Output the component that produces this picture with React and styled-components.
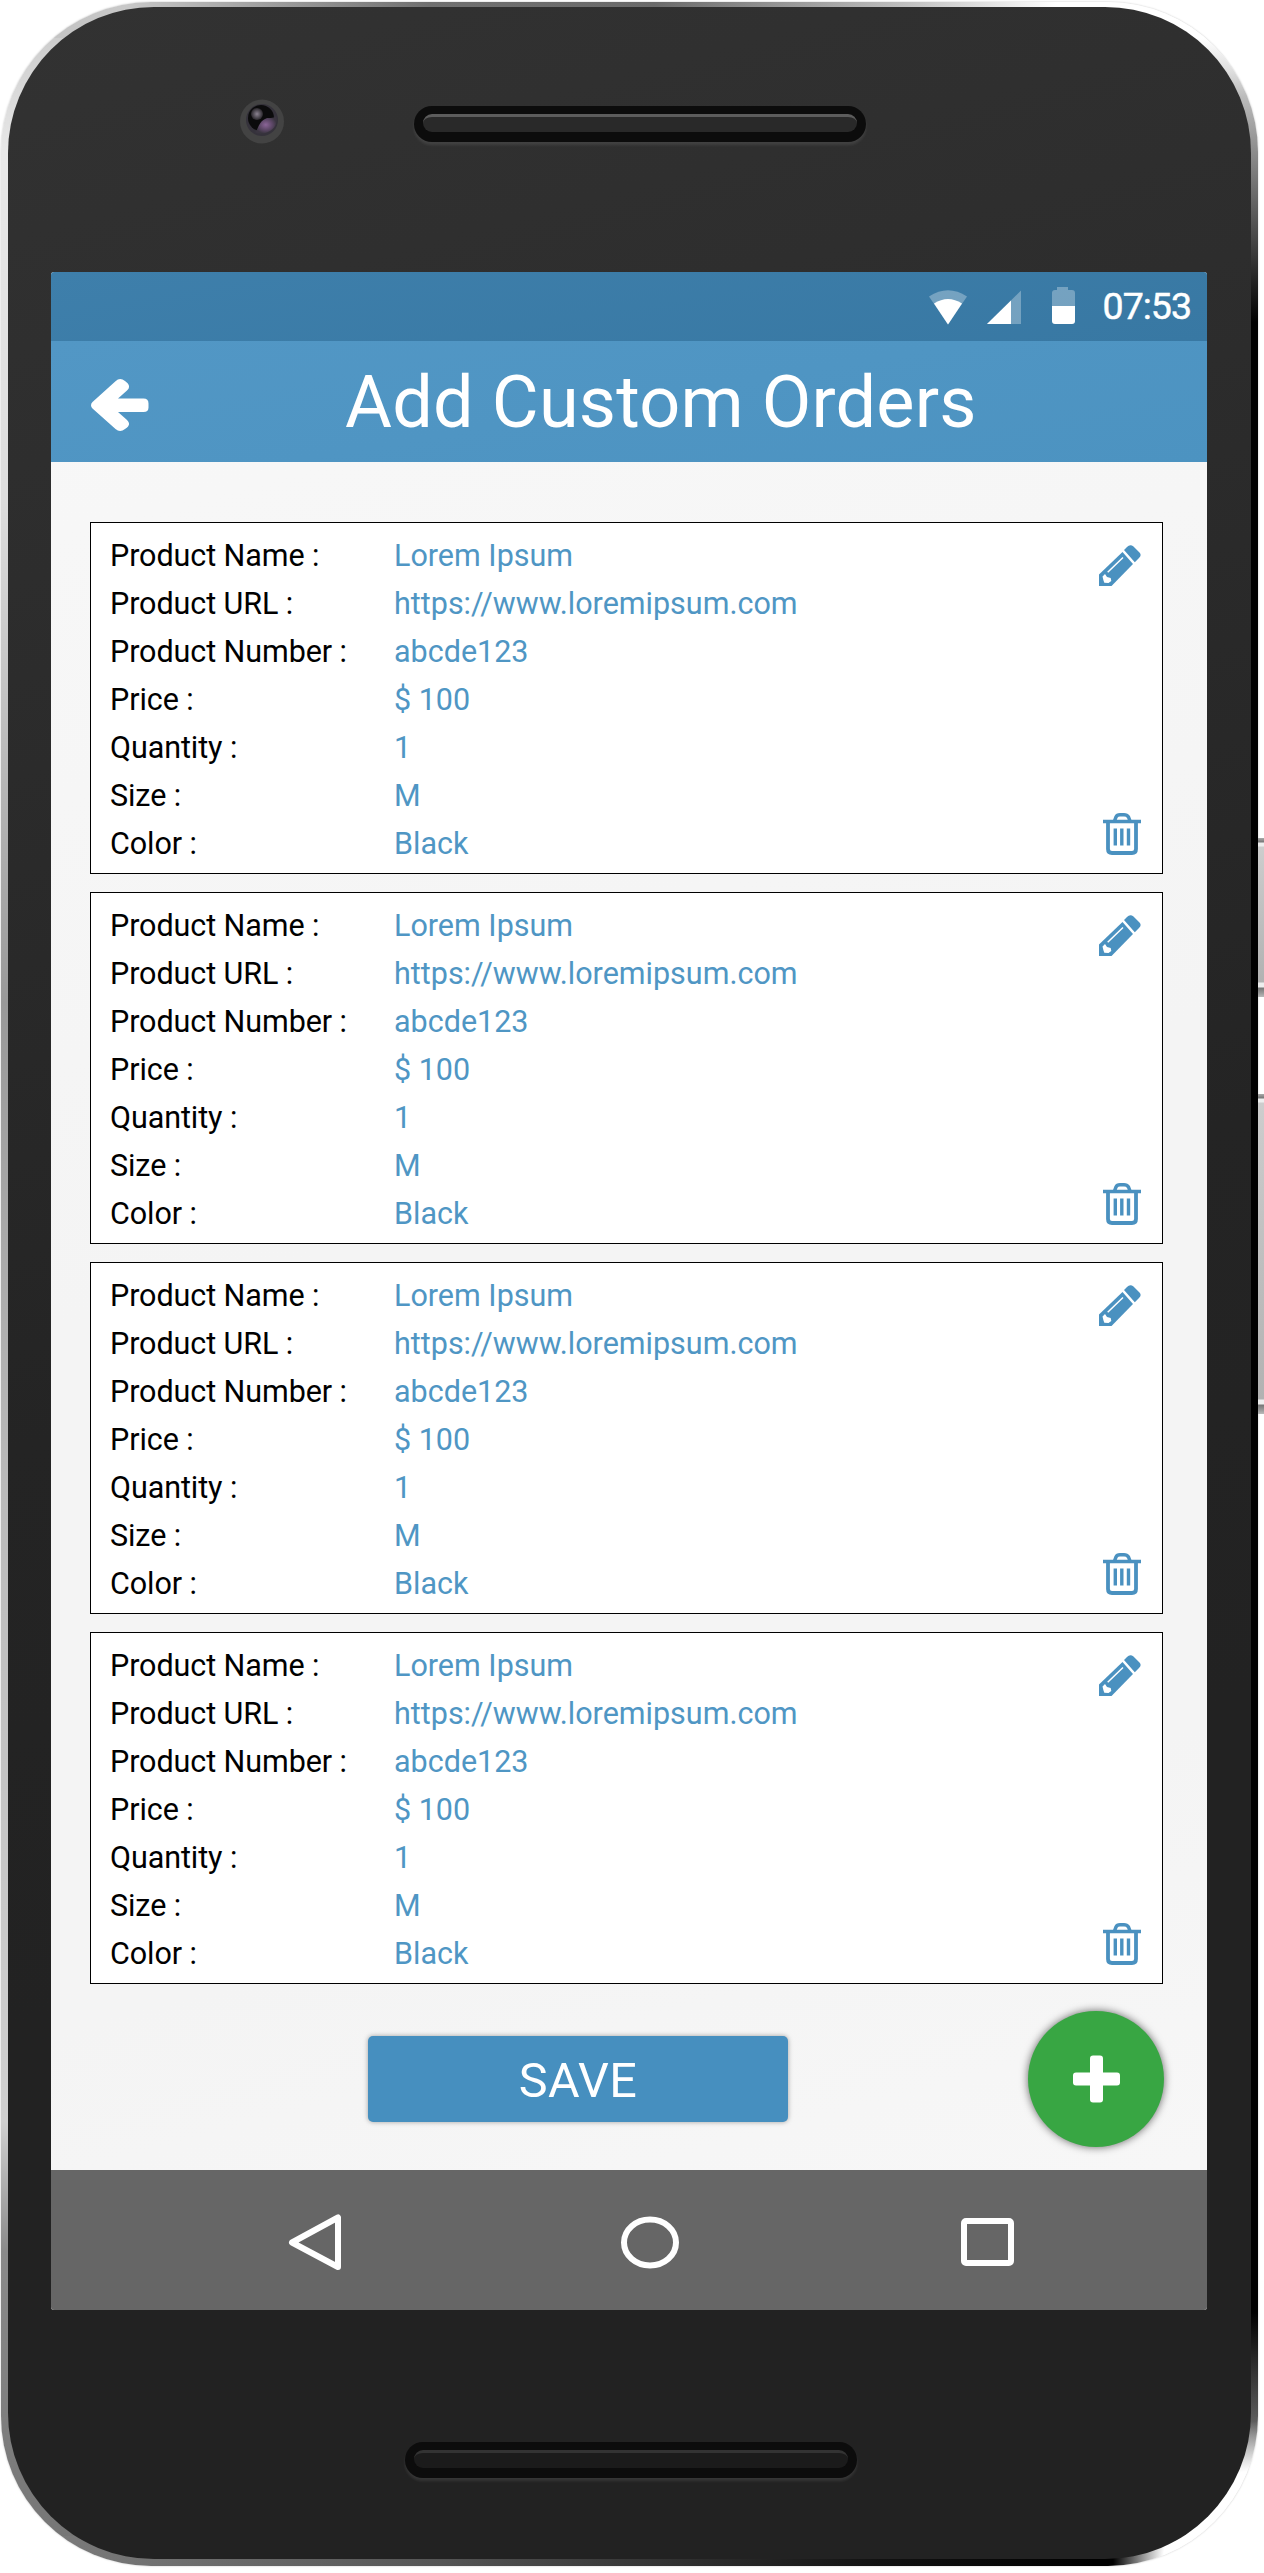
import React from "react";
import styled, { createGlobalStyle } from "styled-components";

const Global = createGlobalStyle`
  *, *::before, *::after { box-sizing: border-box; }
  body { margin: 0; background: #fff; font-family: Roboto, sans-serif; }
  button { font-family: inherit; border: 0; padding: 0; background: none; cursor: pointer; }
  svg { display: block; }
`;

const Stage = styled.div`
  position: relative;
  width: 1264px;
  height: 2573px;
  padding: 2px 0 0 1px;
  overflow: hidden;
`;

const Frame = styled.div`
  width: 1257px;
  height: 2564px;
  padding: 5px 7px 6px;
  border-radius: 150px;
  background:
    radial-gradient(circle at 100% 100%, #fff 0 95px, transparent 145px) 100% 100% / 200px 200px no-repeat,
    linear-gradient(90deg, #808080 0, #555 35%, #111 70%, #000 87%) 0 100% / 100% 30px no-repeat,
    linear-gradient(90deg, #c0c0c0 0, #c8c8c8 10%, #707070 34%, #6a6a6a 52%, #c0c0c0 72%, #fff 84%, #fff 100%) 0 0 / 100% 36px no-repeat,
    linear-gradient(180deg, #fff 0, #fff 36px, #ddd 70px, #bbb 95px, #909090 145px, #444 240px, #000 320px, #000 2310px, #666 2430px, #888 2470px) 100% 0 / 50% 100% no-repeat,
    linear-gradient(180deg, #c4c4c4 0, #e8e8e8 150px, #ddd 500px, #999 1000px, #bbb 1500px, #d0d0d0 2120px, #8a8a8a 2250px, #747474 100%);
  box-shadow: 0 0 2px rgba(0, 0, 0, 0.25);
`;

const Body = styled.div`
  display: flex;
  flex-direction: column;
  align-items: center;
  width: 1243px;
  height: 2552px;
  border-radius: 146px;
  background: linear-gradient(165deg, #323232 0%, #2d2d2d 20%, #242424 50%, #222 70%);
`;

const TopBezel = styled.div`
  display: flex;
  align-items: flex-start;
  width: 100%;
  height: 265px;
  padding: 92px 0 0 231px;
  gap: 129px;
`;

const Speaker = styled.div`
  display: flex;
  width: 452px;
  height: 36px;
  margin-top: 7px;
  padding: 8px 9px 10px;
  border-radius: 18px;
  background: #0c0c0c;
  box-shadow: 0 3px 3px rgba(255, 255, 255, 0.09);

  &::before {
    content: "";
    flex: 1;
    border-radius: 9px;
    border-top: 3px solid ${(p) => (p.$dim ? "#333" : "#5c5c5c")};
    background: ${(p) => (p.$dim ? "#1b1b1b" : "#292929")};
  }
`;

const BottomBezel = styled.div`
  width: 100%;
  padding: 125px 0 0 397px;
`;

const Screen = styled.main`
  display: flex;
  flex-direction: column;
  flex-shrink: 0;
  width: 1156px;
  height: 2038px;
  margin-right: 1px;
  border-radius: 3px;
  overflow: hidden;
  background: linear-gradient(165deg, #f8f8f8 0%, #f4f4f4 45%, #f4f4f4 75%, #f8f8f8 100%);
`;

const StatusBar = styled.div`
  display: flex;
  align-items: center;
  justify-content: flex-end;
  height: 69px;
  padding-right: 16px;
  color: #fff;
  background: linear-gradient(170deg, #3e7fab, #3878a3);
`;

const Clock = styled.span`
  margin-left: 28px;
  font-size: 37.5px;
  line-height: 69px;
  letter-spacing: -1px;
  -webkit-text-stroke: 0.5px #fff;
`;

const Header = styled.header`
  display: flex;
  align-items: center;
  height: 121px;
  padding-left: 40px;
  color: #fff;
  background: linear-gradient(170deg, #5297c5, #4c93c1);
`;

const Title = styled.h1`
  margin: 2px 0 0 196px;
  font-size: 72px;
  font-weight: 400;
  line-height: 121px;
  letter-spacing: 0.2px;
  white-space: nowrap;
`;

const Orders = styled.section`
  display: flex;
  flex-direction: column;
  gap: 18px;
  padding: 60px 44px 0 39px;
`;

const Card = styled.article`
  display: flex;
  justify-content: space-between;
  height: 352px;
  padding: 9px 21px 5px 19px;
  border: 1px solid #000;
  background: #fff;
`;

const Fields = styled.dl`
  display: grid;
  grid-template-columns: 284px auto;
  grid-auto-rows: 48px;
  margin: 0;
  font-size: 30.5px;
  line-height: 48px;
  white-space: nowrap;
`;

const Label = styled.dt`
  color: #000;
  letter-spacing: -0.08px;
`;

const Value = styled.dd`
  margin: 0;
  color: #4f96c4;
`;

const Actions = styled.div`
  display: flex;
  flex-direction: column;
  align-items: flex-end;
  justify-content: space-between;
  padding: 13px 0 13px;
`;

const IconButton = styled.button`
  display: flex;
  color: #4a91c0;
`;

const BackButton = styled(IconButton)`
  margin-top: 7px;
`;

const Footer = styled.div`
  display: flex;
  align-items: center;
  justify-content: space-between;
  height: 186px;
  padding: 4px 43px 0 317px;
`;

const Save = styled.button`
  width: 420px;
  height: 86px;
  padding-top: 3px;
  border-radius: 5px;
  color: #fff;
  font-size: 48.5px;
  line-height: 83px;
  letter-spacing: 0.4px;
  background: #468fbf;
  box-shadow: 0 0 5px rgba(0, 0, 0, 0.35);
`;

const Fab = styled.button`
  display: flex;
  align-items: center;
  justify-content: center;
  width: 136px;
  height: 136px;
  border-radius: 50%;
  background: #38a643;
  box-shadow: 0 0 8px rgba(0, 0, 0, 0.6);
`;

const NavBar = styled.nav`
  display: flex;
  align-items: center;
  height: 140px;
  padding: 4px 0 0 236px;
  background: #666;
`;

const NavButton = styled.button`
  display: flex;
  margin-right: ${(p) => p.$after || 0}px;
`;

const SideKey = styled.div`
  position: absolute;
  left: 1258px;
  top: ${(p) => p.$top}px;
  width: 6px;
  height: ${(p) => p.$height}px;
  background: linear-gradient(
    180deg,
    #aaa 0,
    #777 4px,
    #eee 5px,
    #eee 8px,
    #cdcdcd 9px,
    #b2b2b2 calc(100% - 15px),
    #eee calc(100% - 14px),
    #eee calc(100% - 10px),
    #777 calc(100% - 9px),
    #999 calc(100% - 4px),
    #bbb 100%
  );
`;

const CameraLens = () => (
  <svg width="46" height="46" viewBox="0 0 46 46">
    <defs>
      <radialGradient id="iris">
        <stop offset="0" stopColor="#8a6497" />
        <stop offset="0.6" stopColor="#5c4766" />
        <stop offset="1" stopColor="#3a3540" />
      </radialGradient>
      <radialGradient id="glint">
        <stop offset="0" stopColor="#8b8391" />
        <stop offset="1" stopColor="#2a272c" />
      </radialGradient>
    </defs>
    <circle cx="23" cy="22.500" r="22" fill="#434343" />
    <circle cx="23" cy="21" r="16" fill="#35323b" />
    <circle cx="22" cy="19" r="13" fill="#0b0b0c" />
    <path d="M16 33C19 32 19 22 28 19c3 0 8 0 9-2 2 7-1 13-8 16-5 2-10 2-13 0Z" fill="url(#iris)" />
    <circle cx="18" cy="15" r="6" fill="url(#glint)" />
  </svg>
);

const StatusIcons = () => (
  <svg width="146" height="40" viewBox="0 0 146 40" fill="#fff">
    <path d="M0 9.500Q19-3 38 9.500L19 37.500Z" opacity=".3" />
    <path d="M5 16.500Q19 7.500 33 16.500L19 37.500Z" />
    <path d="M58 37 92 3.500V37Z" opacity=".3" />
    <path d="M58 37 82 13.500V37Z" />
    <path d="M128 0h11v3h4q3 0 3 3v13h-23V6q0-3 3-3h2Z" opacity=".3" />
    <path d="M123 19h23v15q0 3-3 3h-17q-3 0-3-3Z" />
  </svg>
);

const BackArrow = () => (
  <svg width="58" height="54" viewBox="0 0 58 54">
    <path
      d="M1.500 24 24.500 3.200Q29-1 34 3 41 8 36 12.500L27 20.500H52.500Q57.500 20.500 57.500 25.500V29.500Q57.500 34 52.500 34H27L36 42Q41 46.500 34 51 29 55 24.500 51L1.500 30.500Q-1.500 27 1.500 24Z"
      fill="#fff"
    />
  </svg>
);

const Pencil = () => (
  <svg width="42" height="42" viewBox="0 0 42 42">
    <path d="M0 29.500 23.500 7 34 19 12.500 41H0Z" fill="currentColor" />
    <path d="M25 5 28 2Q31-1 34.500 1.500L40.500 7.500Q43 10 40 13L35.800 17.300Z" fill="currentColor" />
    <path d="M3.500 31.500 6 29 8 32 11.700 33 12.300 36 9.500 38 5.300 37.700 4.500 35.500Z" fill="#fff" />
    <path d="M8.700 27.300 24 12.500" stroke="#fff" strokeWidth="1.500" />
  </svg>
);

const Trash = () => (
  <svg width="38" height="42" viewBox="0 0 38 42" fill="none" stroke="currentColor">
    <path d="M0 8.500H38" strokeWidth="3.300" />
    <path d="M11.500 8 13 4Q14 1.800 17 1.800H21Q24 1.800 25.500 4L27 8" strokeWidth="3.500" />
    <path d="M5 9V36Q5 40 9 40H29Q33 40 33 36V9" strokeWidth="3.800" />
    <path d="M12.300 15.500V32.500M18.800 15.500V32.500M25.500 15.500V32.500" strokeWidth="3.400" />
  </svg>
);

const FIELDS = [
  ["Product Name :", "Lorem Ipsum"],
  ["Product URL :", "https://www.loremipsum.com"],
  ["Product Number :", "abcde123"],
  ["Price :", "$ 100"],
  ["Quantity :", "1"],
  ["Size :", "M"],
  ["Color :", "Black"],
];

const OrderCard = () => (
  <Card>
    <Fields>
      {FIELDS.map(([label, value]) => (
        <React.Fragment key={label}>
          <Label>{label}</Label>
          <Value>{value}</Value>
        </React.Fragment>
      ))}
    </Fields>
    <Actions>
      <IconButton aria-label="Edit"><Pencil /></IconButton>
      <IconButton aria-label="Delete"><Trash /></IconButton>
    </Actions>
  </Card>
);

export default function App() {
  return (
    <Stage>
      <Global />
      <Frame>
        <Body>
          <TopBezel>
            <CameraLens />
            <Speaker />
          </TopBezel>
          <Screen>
            <StatusBar>
              <StatusIcons />
              <Clock>07:53</Clock>
            </StatusBar>
            <Header>
              <BackButton aria-label="Back"><BackArrow /></BackButton>
              <Title>Add Custom Orders</Title>
            </Header>
            <Orders>
              {[1, 2, 3, 4].map((id) => <OrderCard key={id} />)}
            </Orders>
            <Footer>
              <Save>SAVE</Save>
              <Fab aria-label="Add">
                <svg width="48" height="48" viewBox="0 0 48 48" fill="#fff">
                  <rect x="18" y="0.500" width="13" height="47" rx="3" />
                  <rect x="1" y="17.500" width="47" height="13" rx="3" />
                </svg>
              </Fab>
            </Footer>
            <NavBar>
              <NavButton aria-label="Back" $after={278}>
                <svg width="56" height="56" viewBox="0 0 56 56" fill="none" stroke="#fff" strokeWidth="6" strokeLinejoin="round">
                  <path d="M5 28.500 51 3.500V53Z" />
                </svg>
              </NavButton>
              <NavButton aria-label="Home" $after={282}>
                <svg width="58" height="54" viewBox="0 0 58 54" fill="none" stroke="#fff" strokeWidth="6">
                  <ellipse cx="29" cy="27.500" rx="26" ry="23" />
                </svg>
              </NavButton>
              <NavButton aria-label="Recent apps">
                <svg width="53" height="50" viewBox="0 0 53 50">
                  <rect x="3" y="4" width="47" height="42" rx="2" fill="none" stroke="#fff" strokeWidth="6" />
                </svg>
              </NavButton>
            </NavBar>
          </Screen>
          <BottomBezel>
            <Speaker $dim />
          </BottomBezel>
        </Body>
      </Frame>
      <SideKey $top={838} $height={159} />
      <SideKey $top={1094} $height={320} />
    </Stage>
  );
}
